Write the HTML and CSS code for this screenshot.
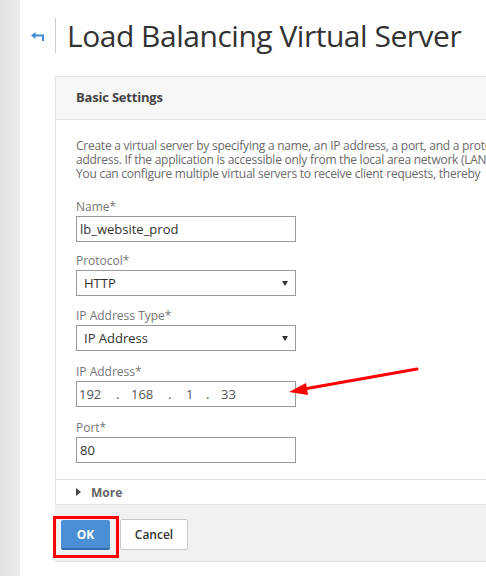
FILE: index.html
```html
<!DOCTYPE html>
<html>
<head>
<meta charset="utf-8">
<link rel="stylesheet" href="styles.css">
</head>
<body>
<div class="rail"></div>
<div class="main">
  <div class="titlebar">
    <svg class="back" width="13" height="9" viewBox="0 0 13 9">
      <path d="M0 3.5 L4.5 0 L4.5 2.5 L13 2.5 L13 9 L11 9 L11 4.5 L4.5 4.5 L4.5 7 Z" fill="#3f88d2"/>
    </svg>
    <div class="divider"></div>
    <h1 class="title">Load Balancing Virtual Server</h1>
  </div>
  <div class="card">
    <div class="card-head">Basic Settings</div>
    <div class="card-body">
      <div class="intro">
        <div class="line">Create a virtual server by specifying a name, an IP address, a port, and a protocol type.</div>
        <div class="line">address. If the application is accessible only from the local area network (LAN)</div>
        <div class="line">You can configure multiple virtual servers to receive client requests, thereby</div>
      </div>
      <div class="field f1">
        <div class="label">Name*</div>
        <div class="input">lb_website_prod</div>
      </div>
      <div class="field f2">
        <div class="label">Protocol*</div>
        <div class="input select"><span class="sel-text">HTTP</span><span class="caret"></span></div>
      </div>
      <div class="field f3">
        <div class="label">IP Address Type*</div>
        <div class="input select"><span class="sel-text">IP Address</span><span class="caret"></span></div>
      </div>
      <div class="field f4">
        <div class="label">IP Address*</div>
        <div class="input ip">
          <span class="oct o1">192</span><span class="dot">.</span><span class="oct o2">168</span><span class="dot">.</span><span class="oct o3">1</span><span class="dot">.</span><span class="oct o4">33</span>
        </div>
      </div>
      <div class="field f5">
        <div class="label">Port*</div>
        <div class="input">80</div>
      </div>
    </div>
    <div class="more"><span class="tri"></span><span>More</span></div>
  </div>
  <div class="footer">
    <div class="ok-wrap"><button class="btn ok">OK</button></div>
    <button class="btn cancel">Cancel</button>
  </div>
</div>
<svg class="annot" width="486" height="576" viewBox="0 0 486 576">
  <line x1="417" y1="369" x2="304" y2="389" stroke="#f00" stroke-width="3" stroke-linecap="round"/>
  <polygon points="289,392 306,383 308,395" fill="#f00"/>
</svg>
</body>
</html>
```
FILE: styles.css
```css
html, body {
  margin: 0;
  padding: 0;
  height: 100%;
}
body {
  display: flex;
  overflow: hidden;
  background: #fff;
  font-family: "Open Sans", "Noto Sans", sans-serif;
  position: relative;
}
.rail {
  width: 20px;
  flex: none;
  background: linear-gradient(to right, #e2e2e2, #ececec);
}
.main {
  flex: 1;
  min-width: 0;
  overflow: hidden;
}
.titlebar {
  display: flex;
  align-items: center;
  margin-top: 18px;
  height: 35px;
}
.back {
  margin-left: 11px;
  margin-top: 1px;
  flex: none;
}
.divider {
  width: 1px;
  height: 35px;
  background: #cccccc;
  margin-left: 11px;
  flex: none;
}
.title {
  margin: 0 0 0 11px;
  font-weight: 400;
  font-size: 30px;
  line-height: 35px;
  color: #333;
  white-space: nowrap;
  letter-spacing: -0.48px;
}
.card {
  margin-left: 35px;
  margin-top: 23px;
  border-left: 1px solid #e3e3e3;
  border-top: 1px solid #e3e3e3;
}
.card-head {
  height: 42px;
  line-height: 40px;
  background: #f7f7f7;
  border-bottom: 1px solid #e3e3e3;
  padding-left: 20px;
  font-weight: 700;
  font-size: 13px;
  color: #444;
  letter-spacing: -0.2px;
}
.card-body {
  padding: 19px 0 16px 20px;
  border-bottom: 1px solid #e3e3e3;
}
.intro {
  margin: 0 0 18px;
  font-size: 12px;
  line-height: 14px;
  color: #6a6a6a;
  white-space: nowrap;
  overflow: hidden;
  letter-spacing: -0.25px;
}
.label {
  font-size: 12px;
  line-height: 15px;
  color: #777;
  margin-bottom: 2px;
}
.f1 { margin-bottom: 11px; }
.f2 { margin-bottom: 12px; }
.f3 { margin-bottom: 13px; }
.f4 { margin-bottom: 13px; }
.input {
  box-sizing: border-box;
  width: 220px;
  height: 26px;
  border: 1px solid #999;
  background: #fff;
  font-size: 13px;
  line-height: 24px;
  color: #333;
  padding-left: 3px;
}
.select {
  display: flex;
  align-items: center;
  justify-content: space-between;
  padding: 0 7px 0 7px;
}
.caret {
  width: 0;
  height: 0;
  border-left: 3px solid transparent;
  border-right: 3px solid transparent;
  border-top: 5px solid #333;
}
.ip {
  display: flex;
  color: #555;
  padding-left: 2px;
}
.oct, .dot {
  display: block;
}
.o1 { width: 37px; }
.dot { width: 15px; }
.o2 { width: 37px; }
.o3 { width: 20px; padding-left: 3px; }
.more {
  height: 24px;
  display: flex;
  align-items: center;
  padding-left: 20px;
  border-bottom: 1px solid #e3e3e3;
  font-size: 12px;
  font-weight: 700;
  color: #666;
}
.tri {
  width: 0;
  height: 0;
  border-top: 4px solid transparent;
  border-bottom: 4px solid transparent;
  border-left: 5px solid #444;
  margin-right: 10px;
}
.footer {
  margin-left: 35px;
  height: 57px;
  background: #f1f1f1;
  border-bottom: 1px solid #dedede;
  display: flex;
  align-items: flex-start;
  padding: 14px 0 0 6px;
  box-sizing: border-box;
  gap: 10px;
}
.ok-wrap {
  position: relative;
  margin-top: 1px;
}
.ok-wrap::after {
  content: "";
  position: absolute;
  left: -8px;
  right: -9px;
  top: -4px;
  bottom: -8px;
  border: 3px solid #f00;
}
.btn {
  font-family: "Open Sans", "Noto Sans", sans-serif;
  font-size: 12px;
  font-weight: 700;
  height: 31px;
  border-radius: 2px;
  padding: 0;
  margin: 0;
  display: block;
}
.ok {
  width: 49px;
  height: 30px;
  background: #4a8fd3;
  color: #fff;
  border: none;
  border-bottom: 2px solid #2f6db0;
}
.cancel {
  width: 68px;
  background: #fff;
  color: #333;
  border: 1px solid #c8c8c8;
  font-weight: 600;
}
.annot {
  position: absolute;
  left: 0;
  top: 0;
  pointer-events: none;
}
```
